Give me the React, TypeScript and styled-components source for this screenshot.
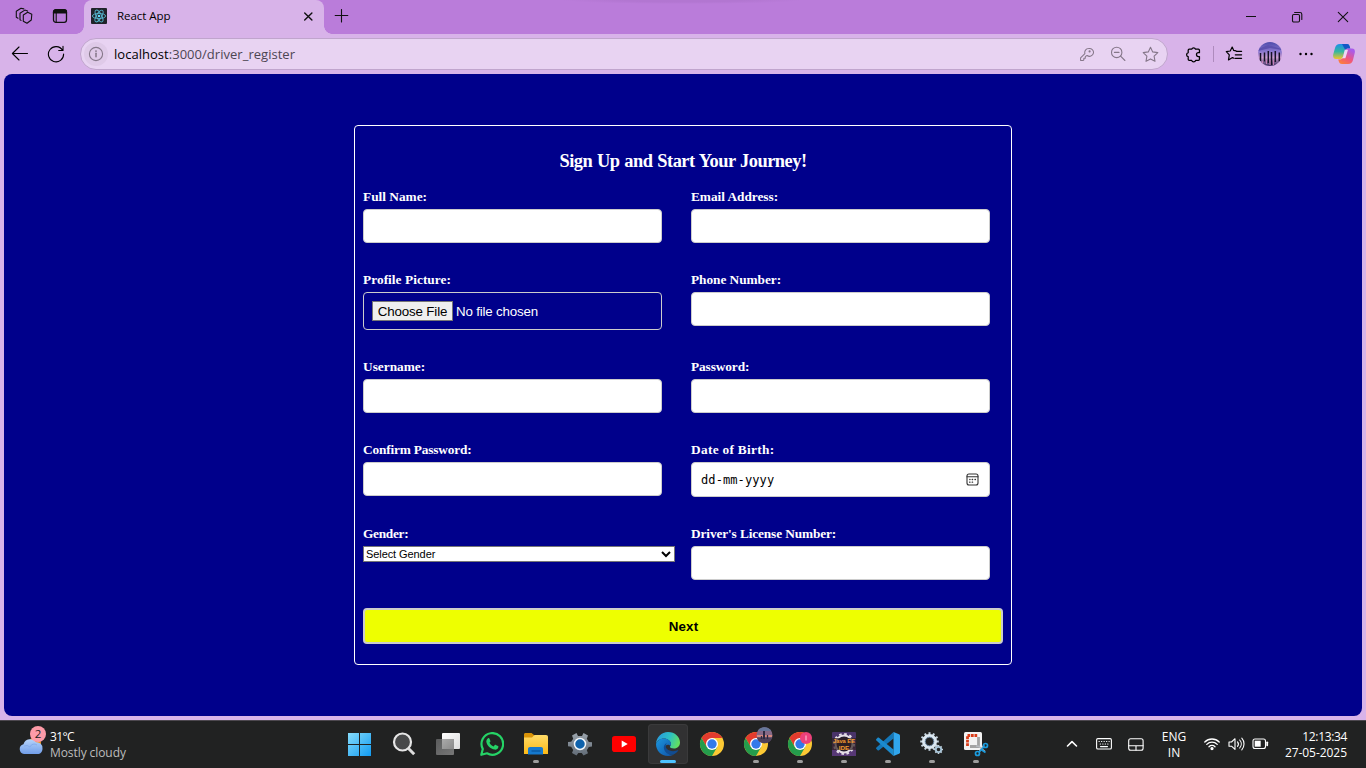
import React from 'react';
import styled, { createGlobalStyle } from 'styled-components';

const GlobalStyle = createGlobalStyle`
  * { box-sizing: border-box; }
  html, body { margin: 0; padding: 0; overflow: hidden; }
  body { font-family: "Open Sans", "Noto Sans", sans-serif; }
  svg { display: block; flex: none; }
`;

const Screen = styled.div`
  width: 1366px;
  height: 768px;
  display: flex;
  flex-direction: column;
  background: #d8b3e9;
  overflow: hidden;
`;

/* ---------- browser chrome ---------- */

const TabStrip = styled.header`
  height: 34px;
  flex: none;
  display: flex;
  background: radial-gradient(ellipse 120px 4px at 683px 0, #b276d1 50%, #ba7cda 100%) #ba7cda;
  color: #111;
`;

const Slot = styled.span<{ $w: number }>`
  width: ${p => p.$w}px;
  flex: none;
  display: flex;
  align-items: center;
  justify-content: center;
`;

const TabStripStart = styled.div`
  width: 84px;
  display: flex;
  padding-left: 6px;
  padding-bottom: 2px;
`;

const Tab = styled.div`
  position: relative;
  width: 240px;
  height: 34px;
  display: flex;
  align-items: center;
  padding: 0 8px 2px 7px;
  gap: 10px;
  background: #d8b3e9;
  border-radius: 8px 8px 0 0;
  &::before, &::after {
    content: '';
    position: absolute;
    bottom: 0;
    width: 8px;
    height: 8px;
  }
  &::before { left: -8px; background: radial-gradient(circle at 0 0, #ba7cda 7.5px, #d8b3e9 8px); }
  &::after { right: -8px; background: radial-gradient(circle at 100% 0, #ba7cda 7.5px, #d8b3e9 8px); }
`;

const TabTitle = styled.span`
  flex: 1;
  margin-bottom: 1px;
  font-size: 11.5px;
  letter-spacing: -0.05px;
  color: #000;
`;

const Spacer = styled.span`
  flex: 1;
`;

const Toolbar = styled.nav`
  height: 40px;
  flex: none;
  display: flex;
  align-items: center;
  padding: 0 4px 0 2px;
`;

const AddressBar = styled.div`
  width: 1088px;
  height: 32px;
  margin-left: 6px;
  margin-right: 5px;
  display: flex;
  align-items: center;
  padding: 0 1px 0 3px;
  border: 1px solid #c0a5cd;
  border-radius: 16px;
  background: #e8d3f2;
  color: #857789;
`;

const InfoDisc = styled.span`
  width: 24px;
  height: 24px;
  display: flex;
  align-items: center;
  justify-content: center;
  border-radius: 50%;
  background: #dfcae8;
`;

const Url = styled.span`
  flex: 1;
  padding-left: 6px;
  font-size: 13px;
  letter-spacing: 0.03px;
  color: #4d4652;
  b { font-weight: 400; color: #000; }
`;

const Divider = styled.span`
  width: 1px;
  height: 16px;
  background: #ae8bbd;
`;

/* ---------- page ---------- */

const Page = styled.main`
  height: 642px;
  margin: 0 4px 4px;
  flex: none;
  display: flex;
  align-items: flex-start;
  justify-content: center;
  padding-top: 51px;
  border-radius: 8px;
  background: #00008b;
`;

const Card = styled.form`
  width: 658px;
  height: 540px;
  padding: 24px 8px 0;
  border: 1px solid #fff;
  border-radius: 4px;
  color: #fff;
`;

const Heading = styled.h2`
  margin: 0 0 16px;
  height: 22px;
  line-height: 22px;
  text-align: center;
  font-family: "Liberation Serif", serif;
  font-size: 18.4px;
  font-weight: 700;
  letter-spacing: -0.5px;
  word-spacing: 0.7px;
`;

const Fields = styled.div`
  display: grid;
  grid-template-columns: 312px 312px;
  column-gap: 16px;
  row-gap: 28px;
  align-items: start;
`;

const Label = styled.label<{ $fit?: number }>`
  display: block;
  height: 21px;
  line-height: 18px;
  font-family: "Liberation Serif", serif;
  font-size: 13.33px;
  font-weight: 700;
  letter-spacing: ${p => p.$fit ?? 0}px;
`;

const TextInput = styled.input`
  display: block;
  width: 299px;
  height: 34px;
  padding: 8px;
  border: 1px solid #ccc;
  border-radius: 4px;
  background: #fff;
  outline: none;
`;

const FileBox = styled.div`
  width: 299px;
  height: 38px;
  display: flex;
  align-items: center;
  gap: 3px;
  padding: 0 8px;
  border: 1px solid #ccc;
  border-radius: 4px;
  font: 13.33px "Liberation Sans", Arial, sans-serif;
  letter-spacing: -0.18px;
`;

const FileButton = styled.button`
  width: 81px;
  height: 20px;
  padding: 0;
  border: 1px solid #767676;
  border-radius: 0;
  background: #efefef;
  color: #000;
  font: inherit;
  letter-spacing: -0.15px;
`;

const DateBox = styled.div`
  width: 299px;
  height: 35px;
  display: flex;
  align-items: center;
  justify-content: space-between;
  padding: 0 10px 0 9px;
  border: 1px solid #ccc;
  border-radius: 4px;
  background: #fff;
  color: #000;
  font: 12px "DejaVu Sans Mono", monospace;
  letter-spacing: 0.1px;
`;

const SelectBox = styled.div`
  width: 312px;
  height: 16px;
  display: flex;
  align-items: center;
  padding-right: 3px;
  border: 1px solid #767676;
  background: #fff;
`;

const Select = styled.select`
  appearance: none;
  flex: 1;
  height: 14px;
  padding: 0 0 0 2px;
  border: 0;
  background: transparent;
  color: #000;
  font: 11px/14px "Liberation Sans", Arial, sans-serif;
  letter-spacing: -0.08px;
`;

const NextButton = styled.button`
  display: block;
  width: 640px;
  height: 36px;
  margin-top: 28px;
  padding: 0 0 0 1px;
  border: 2px solid #ccc;
  border-radius: 4px;
  background: #eeff00;
  color: #000;
  font: 700 13.33px "Liberation Sans", Arial, sans-serif;
  letter-spacing: 0.2px;
`;

/* ---------- taskbar ---------- */

const Taskbar = styled.footer`
  height: 48px;
  flex: none;
  display: flex;
  align-items: center;
  padding-bottom: 1px;
  border-top: 1px solid #4d484f;
  background: #212222;
  color: #fff;
  font-size: 12px;
  line-height: 16px;
`;

const Weather = styled.div`
  width: 338px;
  display: flex;
  align-items: center;
  padding-left: 18px;
  gap: 4px;
`;

const WeatherText = styled.div`
  display: flex;
  flex-direction: column;
  padding-top: 1px;
  letter-spacing: -0.08px;
  color: #bdbdbd;
  b { font-weight: 400; letter-spacing: -0.6px; color: #fff; }
`;

const AppSlot = styled.div`
  width: 44px;
  height: 46px;
  display: flex;
  align-items: center;
  justify-content: center;
`;

const AppTile = styled.div<{ $active?: boolean }>`
  position: relative;
  width: 40px;
  height: 40px;
  display: flex;
  align-items: center;
  justify-content: center;
  border-radius: 4px;
  background: ${p => (p.$active ? '#313132' : 'transparent')};
  box-shadow: ${p => (p.$active ? 'inset 0 0 0 1px #3a3a3b' : 'none')};
`;

const Running = styled.i<{ $active?: boolean }>`
  position: absolute;
  bottom: 1px;
  left: 50%;
  transform: translateX(-50%);
  width: ${p => (p.$active ? 16 : 6)}px;
  height: 3px;
  border-radius: 2px;
  background: ${p => (p.$active ? '#4cc2ff' : '#9d9d9d')};
`;

const Language = styled.div`
  width: 46px;
  padding-top: 2px;
  text-align: center;
`;

const Clock = styled.div`
  width: 74px;
  padding-right: 1px;
  padding-top: 1px;
  text-align: right;
  span { display: block; letter-spacing: -0.05px; }
  span:first-child { letter-spacing: -0.35px; }
`;

/* ---------- chrome icons ---------- */

const line = { fill: 'none', stroke: 'currentColor', strokeWidth: 1.1, strokeLinecap: 'round', strokeLinejoin: 'round' } as const;

const WorkspacesIcon = () => (
  <svg width="18" height="18" viewBox="0 0 18 18" {...line}>
    <path d="M8.300 8 12.700 5.300 16.800 7.300 16.300 13 12 16.300 8.300 14.200ZM6 13.400 5 12.700V6.200L9.800 3.100 12.600 4M3 11.200 1.300 10.200V4.200L6 1.200 8.800 1.900" />
  </svg>
);
const TabActionsIcon = () => (
  <svg width="16" height="16" viewBox="0 0 16 16" {...line}>
    <rect x="1.500" y="1.700" width="13" height="12.600" rx="2.400" strokeWidth="1.300" />
    <path d="M1.500 5V4a2.300 2.300 0 0 1 2.300-2.300h8.400A2.300 2.300 0 0 1 14.500 4v1Z" fill="currentColor" />
    <path d="M4.200 5v9" />
  </svg>
);
const ReactIcon = () => (
  <svg width="16" height="16" viewBox="0 0 16 16">
    <rect width="16" height="16" rx="1" fill="#20232a" />
    <g fill="none" stroke="#55b5cd" strokeWidth="0.900">
      <ellipse cx="8" cy="8" rx="6.600" ry="2.600" />
      <ellipse cx="8" cy="8" rx="6.600" ry="2.600" transform="rotate(60 8 8)" />
      <ellipse cx="8" cy="8" rx="6.600" ry="2.600" transform="rotate(120 8 8)" />
    </g>
    <circle cx="8" cy="8" r="1.300" fill="#61dafb" />
  </svg>
);
const CloseTabIcon = () => (
  <svg width="16" height="16" viewBox="0 0 16 16" {...line} strokeWidth={1.4}><path d="m4.700 4.900 7.200 7.200M11.900 4.900l-7.200 7.200" /></svg>
);
const PlusIcon = () => (
  <svg width="16" height="16" viewBox="0 0 16 16" {...line}><path d="M8.500 0.500v12.500M2.200 6.500h12.600" /></svg>
);
const MinimizeIcon = () => (
  <svg width="12" height="12" viewBox="0 0 12 12" {...line} strokeLinecap="butt" strokeWidth={1}><path d="M1 5.500h10" /></svg>
);
const RestoreIcon = () => (
  <svg width="12" height="12" viewBox="0 0 12 12" {...line}>
    <rect x="1.500" y="3.500" width="7" height="7.500" rx="1.200" />
    <path d="M3.600 1.500H9a1.800 1.800 0 0 1 1.800 1.800v5.200" />
  </svg>
);
const CloseIcon = () => (
  <svg width="12" height="12" viewBox="0 0 12 12" {...line}><path d="m1.300 1.300 9.400 9.400M10.700 1.300l-9.400 9.400" /></svg>
);
const BackIcon = () => (
  <svg width="18" height="18" viewBox="0 0 18 18" {...line}><path d="M16.500 8.500H1.500M8 2 1.400 8.500 8 15" /></svg>
);
const ReloadIcon = () => (
  <svg width="18" height="18" viewBox="0 0 18 18" {...line}>
    <path d="M15.500 5.300A7.600 7.600 0 1 0 16.600 9M16 1.300V5.500h-4.300" />
  </svg>
);
const InfoIcon = () => (
  <svg width="16" height="16" viewBox="0 0 16 16" {...line}>
    <circle cx="8" cy="8" r="6.600" /><path d="M8 7.300v3.500" strokeWidth="1.500" /><circle cx="8" cy="5.100" r=".4" />
  </svg>
);
const KeyIcon = () => (
  <svg width="15" height="15" viewBox="0 0 16 16" {...line}>
    <path d="M10.200 1.700a4.100 4.100 0 0 0-3.900 5.300L1.700 11.600V14a.5.5 0 0 0 .5.500h2l1-.9V12h1.500v-1.500l.8-.9 1.200-.5A4.200 4.200 0 1 0 10.200 1.700Z" />
    <circle cx="11.300" cy="4.700" r=".6" />
  </svg>
);
const ZoomOutIcon = () => (
  <svg width="16" height="16" viewBox="0 0 16 16" {...line}>
    <circle cx="6.700" cy="6.400" r="5.200" /><path d="M4.400 6.400H9M10.600 10.200l4.300 4.300" />
  </svg>
);
const StarIcon = () => (
  <svg width="17" height="17" viewBox="0 0 17 17" {...line}>
    <path d="m8.500 1.300 2.200 4.600 5.100.7-3.700 3.600.9 5.100-4.500-2.400-4.500 2.400.9-5.100L1.200 6.600l5.100-.7Z" />
  </svg>
);
const PuzzleIcon = () => (
  <svg width="17" height="17" viewBox="0 0 16 16" {...line} strokeWidth={1.200}>
    <path d="M4 3h2.300A1.900 1.900 0 0 1 9.900 3h2.700a1 1 0 0 1 1 1v2.300h-1a1.800 1.800 0 0 0 0 3.600h1v2.600a1 1 0 0 1-1 1H10a1.900 1.900 0 0 1-3.700 0H4a1 1 0 0 1-1-1V10a1.900 1.900 0 0 1 0-3.700V4a1 1 0 0 1 1-1Z" />
  </svg>
);
const FavoritesIcon = () => (
  <svg width="18" height="18" viewBox="0 0 18 18" {...line} strokeWidth={1.200}>
    <path d="M11 5.800 8.700 5.400 7.200 2 5.200 6 1.300 6.700l3 3.200-.8 5 4-2.300 1.500.7M11.400 6.300h5.200M10.300 9.800h6.300M10.300 13.300h6.300" />
  </svg>
);
const ProfilePicture = () => (
  <svg width="24" height="24" viewBox="0 0 24 24">
    <defs>
      <linearGradient id="sky" x1="0" y1="0" x2="0" y2="1">
        <stop offset="0" stopColor="#4c4bab" /><stop offset=".4" stopColor="#8b78cf" />
        <stop offset=".65" stopColor="#cb9dd0" /><stop offset="1" stopColor="#3a2c60" />
      </linearGradient>
      <clipPath id="disc"><circle cx="12" cy="12" r="12" /></clipPath>
    </defs>
    <g clipPath="url(#disc)">
      <rect width="24" height="24" fill="url(#sky)" />
      <path d="M0 7 10 3l14 4v1L12 6 0 9Z" fill="#5b50ae" />
      <path d="M2.500 11v8M6.500 10.500v9M10.300 9v12M13.500 10v13M17.300 9v11M21.300 10.500v9" stroke="#151127" strokeWidth="1.500" />
      <path d="M4.500 19v3M8.500 18v4M12 18v5M15.500 18v5" stroke="#c680b4" />
    </g>
  </svg>
);
const DotsIcon = () => (
  <svg width="16" height="16" viewBox="0 0 16 16" fill="currentColor">
    <circle cx="2.500" cy="8" r="1.200" /><circle cx="8" cy="8" r="1.200" /><circle cx="13.500" cy="8" r="1.200" />
  </svg>
);
const CopilotIcon = () => (
  <svg width="22" height="22" viewBox="0 0 22 22">
    <defs>
      <linearGradient id="cpA" x1="0" y1="0" x2="0" y2="1">
        <stop offset="0" stopColor="#1c8fe8" /><stop offset=".5" stopColor="#35b6a0" /><stop offset="1" stopColor="#f1c32c" />
      </linearGradient>
      <linearGradient id="cpB" x1="0" y1="1" x2=".6" y2="0">
        <stop offset="0" stopColor="#ff8a2b" /><stop offset=".5" stopColor="#f0567c" /><stop offset="1" stopColor="#a95bea" />
      </linearGradient>
    </defs>
    <path d="M7 1h7c1.500 0 2 .7 2.500 2l.8 2.500h-2.500c-1.500 0-2.300 1-2.800 2.500L10 14c-.6 1.600-1.400 2-2.800 2H3C.5 16-.2 14 .2 11.600L2 5c.8-2.800 2-4 5-4Z" fill="url(#cpA)" />
    <path d="M9 1h5c1.500 0 2 .7 2.500 2l.8 2.500h-2.500c-1 0-2 .6-2.500 1.500Z" fill="#1457c6" />
    <path d="M15 21H9c-1.700 0-2.500-.7-3-2l-.8-2.500h2c1.500 0 2.300-.9 2.800-2.500L12 8c.5-1.600 1.300-2.500 2.800-2.500H19c2.600 0 3.300 2 2.700 4.600L20 17c-.8 2.800-2 4-5 4Z" fill="url(#cpB)" />
    <path d="M11.800 6.800h3.200l-2.600 8.400H8.200c1 0 1.500-.5 1.800-1.400Z" fill="#edd9f4" />
  </svg>
);
const CalendarIcon = () => (
  <svg width="13" height="13" viewBox="0 0 13 13" {...line} stroke="#333">
    <rect x="1" y="1" width="11" height="11" rx="2" /><path d="M1 3.800h11" />
    <path d="M6.200 6.500h.4M9 6.500h.4M3.600 9.200h.4M6.200 9.200h.4M3.800 6.500h.2" strokeWidth="1.300" />
  </svg>
);
const ChevronDown = () => (
  <svg width="10" height="8" viewBox="0 0 10 8" fill="none" stroke="#000" strokeWidth="2"><path d="m1 2 4 4 4-4" /></svg>
);

/* ---------- taskbar icons ---------- */

const WeatherIcon = () => (
  <svg width="28" height="36" viewBox="0 0 28 36">
    <defs>
      <linearGradient id="cloud" x1="0" y1="0" x2="0" y2="1"><stop offset="0" stopColor="#b7d4fa" /><stop offset="1" stopColor="#719ee9" /></linearGradient>
    </defs>
    <circle cx="17" cy="17" r="6" fill="#f6971f" />
    <path d="M6 28a5 5 0 0 1-.5-9.800A7 7 0 0 1 18 16.300a5.700 5.700 0 0 1 6.500 6.200c0 3.500-2 5.500-5 5.500Z" fill="url(#cloud)" />
    <path d="M6 20a5.500 5.500 0 0 1 6 1 4.500 4.500 0 0 1 7-2" fill="none" stroke="#85aceb" />
    <circle cx="20" cy="8" r="8" fill="#fd9ba8" />
    <text x="20" y="12" textAnchor="middle" fontSize="11.500" fontFamily="Open Sans" fill="#202020">2</text>
  </svg>
);
const WindowsIcon = () => (
  <svg width="24" height="24" viewBox="0 0 24 24">
    <defs><linearGradient id="win" x1="0" y1="0" x2="1" y2="1"><stop offset="0" stopColor="#86dcfb" /><stop offset="1" stopColor="#119bf2" /></linearGradient></defs>
    <path d="M0 1H11v11H0ZM12 1h11v11H12ZM0 13H11V24H0ZM12 13h11v11H12Z" fill="url(#win)" />
  </svg>
);
const SearchIcon = () => (
  <svg width="24" height="24" viewBox="0 0 24 24" fill="none">
    <circle cx="10.500" cy="10" r="8.500" fill="#48494a" stroke="#e6e6e6" strokeWidth="2.200" />
    <path d="m16.500 16.500 5.700 5.700" stroke="#ddd" strokeWidth="3" />
  </svg>
);
const TaskViewIcon = () => (
  <svg width="24" height="24" viewBox="0 0 24 24">
    <defs>
      <linearGradient id="tvA" x1="0" y1="0" x2="1" y2="1"><stop offset="0" stopColor="#fff" /><stop offset="1" stopColor="#dcdcdc" /></linearGradient>
      <linearGradient id="tvB" x1="0" y1="0" x2="1" y2="1"><stop offset="0" stopColor="#5a5b5c" /><stop offset="1" stopColor="#777" /></linearGradient>
      <linearGradient id="tvC" x1="0" y1="0" x2="1" y2="1"><stop offset="0" stopColor="#aaa" /><stop offset="1" stopColor="#8a8a8a" /></linearGradient>
    </defs>
    <rect x="6" y="1" width="18" height="16" rx="1" fill="url(#tvA)" />
    <rect x="0" y="7" width="18" height="16" rx="1" fill="url(#tvB)" />
    <rect x="6" y="7" width="12" height="10" fill="url(#tvC)" />
  </svg>
);
const WhatsAppIcon = () => (
  <svg width="24" height="24" viewBox="0 0 24 24">
    <path d="M1.300 22.800 2.800 17A10.800 10.800 0 1 1 7 21.300Z" fill="#212522" stroke="#25d366" strokeWidth="2.200" strokeLinejoin="round" />
    <path d="M7.800 6.400c.5-.5 1.300-.4 1.600.2l1 2.300c.1.400 0 .7-.9 1.800.9 1.800 2.200 3 4.100 3.800l1.200-1.400c.3-.3.600-.3 1-.2l2.200 1c.5.300.5.600.4 1.100-.4 1.900-2 2.800-3.700 2.600C10.300 17 6.600 13.200 6.300 9.600c0-1.400.7-2.500 1.500-3.200Z" fill="#25d366" />
  </svg>
);
const FolderIcon = () => (
  <svg width="24" height="24" viewBox="0 0 24 24">
    <defs><linearGradient id="fold" x1="0" y1="0" x2="0" y2="1"><stop offset="0" stopColor="#ffdb68" /><stop offset="1" stopColor="#fbb917" /></linearGradient></defs>
    <path d="M0 2.500C0 1.500.7 1 1.500 1h6L10 3v3H0Z" fill="#d99308" />
    <path d="M0 5.500h8L10.500 3H22c1.300 0 2 .8 2 2v17H0Z" fill="url(#fold)" />
    <path d="M4 22.500V17c0-1.200.8-2 2-2h11c1.200 0 2 .8 2 2v5.500Z" fill="#1579ce" />
    <path d="M7.500 19h9" stroke="#0a559e" strokeWidth="1.300" />
  </svg>
);
const teeth = (n: number) => Array.from({ length: n }, (_, i) => (i * 360) / n);
const SettingsIcon = () => (
  <svg width="24" height="24" viewBox="0 0 24 24">
    <defs><linearGradient id="gear" x1="0" y1="0" x2="0" y2="1"><stop offset="0" stopColor="#9ba4ad" /><stop offset="1" stopColor="#626c77" /></linearGradient></defs>
    <path d="m8.500 1 1.500 3h4L15.500 1l4.500 2.500-1.200 3.300 2 3.200 3.200.2v4.200l-3.200.6-2 3.200 1.200 3-4.500 2.300-1.800-2.500h-3.400L8.500 23.500 4 21l1.200-3-2-3.200L0 14.200V10l3.200-.2 2-3L4 3.500Z" fill="url(#gear)" />
    <circle cx="12" cy="12" r="5.500" fill="#0e62ac" stroke="#f4f7fa" strokeWidth="1.500" />
  </svg>
);
const YouTubeIcon = () => (
  <svg width="24" height="24" viewBox="0 0 24 24"><rect y="4" width="24" height="16" rx="2.800" fill="#f00" /><path d="m9.700 8.500 6 3.500-6 3.500Z" fill="#fff" /></svg>
);
const EdgeIcon = () => (
  <svg width="24" height="24" viewBox="0 0 24 24">
    <defs>
      <linearGradient id="edA" x1="0" y1=".2" x2="1" y2=".5"><stop offset="0" stopColor="#2896e0" /><stop offset=".55" stopColor="#2cc0c4" /><stop offset="1" stopColor="#63df5f" /></linearGradient>
      <linearGradient id="edB" x1="0" y1="0" x2="1" y2="1"><stop offset="0" stopColor="#1b96df" /><stop offset="1" stopColor="#1052a5" /></linearGradient>
    </defs>
    <path d="M0 12C.3 5 5.500 0 12 0c7 0 12 5 12 10.500 0 3.500-2.500 6-6 6-2.700 0-4.300-1-4-2 .5-.9 1-1.300 1-2.500C15 9 11.500 6.500 8 6.500c-4 0-7 2.300-8 5.500Z" fill="url(#edA)" />
    <path d="M0 12c1-3.500 4.500-5.500 8-5.500 4 0 7 2.500 7 5.500 0 .8-.3 1.500-.6 2-1.200-1.800-5.400-2-5.400 2 0 4 4 7 8 7-1.500.7-3.200 1-5 1C5 24 0 18.500 0 12Z" fill="url(#edB)" />
    <path d="M10 11.500c-1.800 1-2.500 3-2 5.300.8 4 5 6.500 9.200 6 2.300-1.100 4.200-2.800 5.300-4.700-4 1.800-9 1.500-11.500-1-1.700-1.800-1.800-4-.1-5.600Z" fill="#114c91" />
  </svg>
);
const ChromeBase = () => (
  <>
    <circle cx="12" cy="12" r="12" fill="#fcc934" />
    <path d="M12 12 6.800 15 1.600 6A12 12 0 0 1 22.400 6H12Z" fill="#e33b2e" />
    <path d="M1.600 6A12 12 0 0 0 12 24l5.200-9H6.800Z" fill="#249c4c" />
    <circle cx="12" cy="12" r="6" fill="#fff" />
    <circle cx="12" cy="12" r="4.700" fill="#3379ea" />
  </>
);
const ChromeIcon = ({ badge }: { badge?: 'photo' | 'initial' }) => (
  <svg width="24" height="24" viewBox="0 0 24 24" overflow="visible">
    <ChromeBase />
    {badge === 'photo' && (
      <g>
        <circle cx="20.500" cy="3.200" r="8" fill="#866a88" />
        <path d="M12.800 5.500h15.400a8 8 0 0 1-15.400 0Z" fill="#4d4158" />
        <path d="M13.700-1a8 8 0 0 1 13.600 0Z" fill="#66769a" />
        <path d="M13 3h15v2H13Z" fill="#d6887f" />
        <path d="M20-1v8" stroke="#2e2a40" strokeWidth="2" />
        <path d="M23.500 3v4M17.500 4v3" stroke="#2e2a40" strokeWidth="1.300" />
      </g>
    )}
    {badge === 'initial' && (
      <g><circle cx="18" cy="6" r="6" fill="#ec407a" /><path d="M18 3.500v5" stroke="#fab5cb" strokeWidth="1.200" /></g>
    )}
  </svg>
);
const EclipseIcon = () => (
  <svg width="24" height="24" viewBox="0 0 24 24">
    <rect width="24" height="24" rx="1" fill="#493369" />
    <path d="M0 16h24v8H0Z" fill="#573876" />
    <circle cx="12" cy="12" r="8.500" fill="#251d2d" stroke="#e4dfe6" strokeWidth="2" />
    <circle cx="12" cy="12" r="10" fill="none" stroke="#e4dfe6" strokeWidth="2" strokeDasharray="2.600 2.630" />
    <rect y="6" width="24" height="12" fill="#30201f" fillOpacity=".7" />
    <g fill="#f69b30" fontFamily="Liberation Sans" fontWeight="700" textAnchor="middle">
      <text x="12" y="10.700" fontSize="5.800" textLength="22" lengthAdjust="spacingAndGlyphs">Java EE</text>
      <text x="12" y="17.800" fontSize="5.800" textLength="10.500" lengthAdjust="spacingAndGlyphs">IDE</text>
    </g>
  </svg>
);
const VSCodeIcon = () => (
  <svg width="24" height="24" viewBox="0 0 24 24">
    <path d="M17.500 0v6.500L3 18.200c-.5.400-1 .3-1.400 0L.4 17c-.5-.5-.5-1 0-1.500Z" fill="#1477b8" />
    <path d="M17.500 24v-6.500L3 5.800c-.5-.4-1-.3-1.400 0L.4 7c-.5.500-.5 1 0 1.500Z" fill="#1b8acd" />
    <path d="m17.500 0 5.500 2.300c.6.300 1 .8 1 1.500v16.400c0 .7-.4 1.200-1 1.500L17.500 24Z" fill="#30a6ed" />
  </svg>
);
const ServicesIcon = () => (
  <svg width="24" height="24" viewBox="0 0 24 24" fill="none" stroke="#c6d4df">
    {teeth(12).map(a => <path key={a} d="M9.500.2v3" strokeWidth="2" transform={`rotate(${a} 9.500 9.500)`} />)}
    <circle cx="9.500" cy="9.500" r="6" strokeWidth="3" stroke="#dbe7f0" />
    <circle cx="9.500" cy="9.500" r="4.300" stroke="#7692ae" />
    {teeth(8).map(a => <path key={a} d="M18.500 13v2" strokeWidth="1.600" transform={`rotate(${a} 18.500 17.500)`} />)}
    <circle cx="18.500" cy="17.500" r="2.700" strokeWidth="1.800" stroke="#a9c6d9" />
  </svg>
);
const SnipIcon = () => (
  <svg width="24" height="24" viewBox="0 0 24 24" fill="none" overflow="visible">
    <rect width="18" height="18" rx="1.500" fill="#f3f3f3" />
    <path d="M3.500 14V3.500H14" stroke="#d93c19" strokeWidth="2.800" strokeDasharray="2.700 .8" />
    <path d="M14.500 5v9.500H6" stroke="#a3a3a3" strokeWidth="2.800" />
    <path d="m12 14 3 .5 6 5M15 20l5-7" stroke="#b7bbc0" strokeWidth="1.500" />
    <circle cx="13.500" cy="21.500" r="2" stroke="#1b9cdf" strokeWidth="1.700" />
    <circle cx="21.500" cy="13.500" r="2" stroke="#1b9cdf" strokeWidth="1.700" />
    <path d="m15 20 4.800-5M17 17.500l4.500 3" stroke="#1b9cdf" strokeWidth="1.600" />
  </svg>
);

const TrayChevron = () => (
  <svg width="12" height="12" viewBox="0 0 12 12" {...line} strokeWidth={1.600}><path d="M1.500 8 6 3.600 10.500 8" /></svg>
);
const KeyboardIcon = () => (
  <svg width="16" height="12" viewBox="0 0 16 12" {...line}>
    <rect x=".6" y=".6" width="14.800" height="10.400" rx="1.300" />
    <path d="M3 3.500h.3M5.500 3.500h.3M8 3.500h.3M10.500 3.500h.3M13 3.500h.2M4.200 6h.3M6.700 6h.3M9.200 6h.3M11.700 6h.3M4.500 8.600h7" />
  </svg>
);
const TouchpadIcon = () => (
  <svg width="16" height="13" viewBox="0 0 16 13" {...line}><rect x=".7" y=".7" width="14.400" height="11.600" rx="2" /><path d="M.7 7.800h14.400M8 7.800v4.300" /></svg>
);
const WifiIcon = () => (
  <svg width="16" height="14" viewBox="0 0 16 14" {...line} strokeWidth={1.300}>
    <path d="M.8 5a10.200 10.200 0 0 1 14.400 0M2.800 7.400a7.200 7.200 0 0 1 10.400 0M5 9.700a4.200 4.200 0 0 1 6 0" /><circle cx="8" cy="11.600" r="1" fill="currentColor" />
  </svg>
);
const SpeakerIcon = () => (
  <svg width="17" height="14" viewBox="0 0 17 14" {...line}>
    <path d="M1 5v4.200h2.500L7 12.300V1.700L3.500 5ZM9.500 4.800a3.500 3.500 0 0 1 0 4.500M11.700 3a6 6 0 0 1 0 8M13.800 1.200a8.700 8.700 0 0 1 0 11.600" />
  </svg>
);
const BatteryIcon = () => (
  <svg width="17" height="12" viewBox="0 0 17 12" {...line}>
    <rect x="1" y="1" width="12.500" height="9.500" rx="2" /><rect x="2.700" y="2.700" width="6" height="6" fill="currentColor" stroke="none" /><path d="M15.200 4.300v3" strokeWidth="1.800" />
  </svg>
);

const apps: { icon: React.ReactNode; running?: boolean; active?: boolean }[] = [
  { icon: <WindowsIcon /> },
  { icon: <SearchIcon /> },
  { icon: <TaskViewIcon /> },
  { icon: <WhatsAppIcon /> },
  { icon: <FolderIcon />, running: true },
  { icon: <SettingsIcon /> },
  { icon: <YouTubeIcon /> },
  { icon: <EdgeIcon />, running: true, active: true },
  { icon: <ChromeIcon /> },
  { icon: <ChromeIcon badge="photo" />, running: true },
  { icon: <ChromeIcon badge="initial" />, running: true },
  { icon: <EclipseIcon />, running: true },
  { icon: <VSCodeIcon />, running: true },
  { icon: <ServicesIcon />, running: true },
  { icon: <SnipIcon />, running: true },
];

const Field = ({ label, fit, children }: { label: string; fit?: number; children?: React.ReactNode }) => (
  <div>
    <Label $fit={fit}>{label}</Label>
    {children ?? <TextInput aria-label={label} />}
  </div>
);

export default function App() {
  return (
    <Screen>
      <GlobalStyle />
      <TabStrip>
        <TabStripStart>
          <Slot $w={36}><WorkspacesIcon /></Slot>
          <Slot $w={36}><TabActionsIcon /></Slot>
        </TabStripStart>
        <Tab>
          <ReactIcon />
          <TabTitle>React App</TabTitle>
          <CloseTabIcon />
        </Tab>
        <Slot $w={34}><PlusIcon /></Slot>
        <Spacer />
        <Slot $w={46}><MinimizeIcon /></Slot>
        <Slot $w={46}><RestoreIcon /></Slot>
        <Slot $w={46}><CloseIcon /></Slot>
      </TabStrip>

      <Toolbar>
        <Slot $w={36}><BackIcon /></Slot>
        <Slot $w={36}><ReloadIcon /></Slot>
        <AddressBar>
          <InfoDisc><InfoIcon /></InfoDisc>
          <Url><b>localhost</b>:3000/driver_register</Url>
          <Slot $w={32}><KeyIcon /></Slot>
          <Slot $w={32}><ZoomOutIcon /></Slot>
          <Slot $w={32}><StarIcon /></Slot>
        </AddressBar>
        <Slot $w={40}><PuzzleIcon /></Slot>
        <Divider />
        <Slot $w={40}><FavoritesIcon /></Slot>
        <Slot $w={32}><ProfilePicture /></Slot>
        <Slot $w={40}><DotsIcon /></Slot>
        <Slot $w={36}><CopilotIcon /></Slot>
      </Toolbar>

      <Page>
        <Card onSubmit={e => e.preventDefault()}>
          <Heading>Sign Up and Start Your Journey!</Heading>
          <Fields>
            <Field label="Full Name:" />
            <Field label="Email Address:" fit={-0.03} />
            <Field label="Profile Picture:" fit={0.05}>
              <FileBox><FileButton type="button">Choose File</FileButton>No file chosen</FileBox>
            </Field>
            <Field label="Phone Number:" fit={-0.05} />
            <Field label="Username:" />
            <Field label="Password:" fit={-0.1} />
            <Field label="Confirm Password:" fit={-0.17} />
            <Field label="Date of Birth:" fit={0.3}>
              <DateBox>dd-mm-yyyy<CalendarIcon /></DateBox>
            </Field>
            <Field label="Gender:" fit={-0.3}>
              <SelectBox>
                <Select defaultValue=""><option value="">Select Gender</option></Select>
                <ChevronDown />
              </SelectBox>
            </Field>
            <Field label="Driver's License Number:" fit={-0.12} />
          </Fields>
          <NextButton>Next</NextButton>
        </Card>
      </Page>

      <Taskbar>
        <Weather>
          <WeatherIcon />
          <WeatherText><b>31°C</b><span>Mostly cloudy</span></WeatherText>
        </Weather>
        {apps.map((app, i) => (
          <AppSlot key={i}>
            <AppTile $active={app.active}>
              {app.icon}
              {app.running && <Running $active={app.active} />}
            </AppTile>
          </AppSlot>
        ))}
        <Spacer />
        <Slot $w={32}><TrayChevron /></Slot>
        <Slot $w={32}><KeyboardIcon /></Slot>
        <Slot $w={31}><TouchpadIcon /></Slot>
        <Language>ENG<br />IN</Language>
        <Slot $w={29}><WifiIcon /></Slot>
        <Slot $w={21}><SpeakerIcon /></Slot>
        <Slot $w={27}><BatteryIcon /></Slot>
        <Clock><span>12:13:34</span><span>27-05-2025</span></Clock>
        <Slot $w={18} />
      </Taskbar>
    </Screen>
  );
}
